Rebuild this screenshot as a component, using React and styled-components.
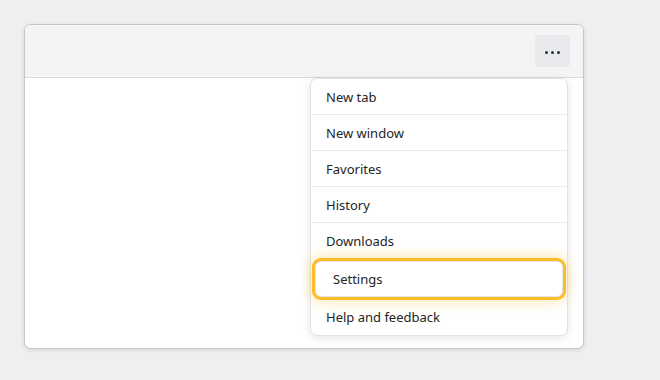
import styled, { createGlobalStyle } from "styled-components";

const GlobalStyle = createGlobalStyle`
  html, body {
    margin: 0;
    padding: 0;
    background: #eeeff1;
    font-family: "Noto Sans", "Open Sans", sans-serif;
  }
`;

const Page = styled.div`
  padding: 24px 76px 30px 24px;
`;

const Window = styled.section`
  position: relative;
  width: 558px;
  height: 323px;
  background: #ffffff;
  border: 1px solid #c4c6ca;
  border-radius: 7px;
  box-shadow: 0 1px 4px rgba(0, 0, 0, 0.12);
`;

const Toolbar = styled.header`
  display: flex;
  justify-content: flex-end;
  align-items: center;
  height: 52px;
  padding: 0 13px;
  background: #f4f4f4;
  border-bottom: 1px solid #d9d9d9;
  border-radius: 7px 7px 0 0;
`;

const MoreButton = styled.button`
  display: flex;
  align-items: center;
  justify-content: center;
  gap: 3px;
  width: 35px;
  height: 32px;
  padding: 2px 0 0;
  border: none;
  border-radius: 4px;
  background: #e8e9ec;
  cursor: pointer;
`;

const Dot = styled.span`
  width: 3px;
  height: 3px;
  border-radius: 50%;
  background: #2b3038;
`;

const Menu = styled.ul`
  position: absolute;
  top: 53px;
  right: 15px;
  width: 256px;
  margin: 0;
  padding: 0;
  list-style: none;
  background: #ffffff;
  border: 1px solid #e2e2e2;
  border-radius: 7px;
  box-shadow: 0 2px 8px rgba(0, 0, 0, 0.1);
`;

const Item = styled.li`
  height: 35px;
  display: flex;
  align-items: center;
  padding: 0 15px;
  font-size: 13px;
  color: #242424;
  border-bottom: 1px solid ${(p) => (p.$last ? "transparent" : "#ececec")};
`;

const FocusedItem = styled.li`
  height: 34px;
  display: flex;
  align-items: center;
  margin: 2px 4px;
  padding: 0 17px;
  font-size: 13px;
  color: #242424;
  background: #ffffff;
  border: 1px solid #e6e6e6;
  border-radius: 6px;
  box-shadow: 0 0 0 3px #fbbd28, 0 0 14px 4px rgba(251, 189, 40, 0.4);
`;

const items = ["New tab", "New window", "Favorites", "History", "Downloads"];

export default function App() {
  return (
    <Page>
      <GlobalStyle />
      <Window>
        <Toolbar>
          <MoreButton aria-label="More">
            <Dot />
            <Dot />
            <Dot />
          </MoreButton>
        </Toolbar>
        <Menu>
          {items.map((label) => (
            <Item key={label} $last={label === "Downloads"}>
              {label}
            </Item>
          ))}
          <FocusedItem>Settings</FocusedItem>
          <Item $last>Help and feedback</Item>
        </Menu>
      </Window>
    </Page>
  );
}
